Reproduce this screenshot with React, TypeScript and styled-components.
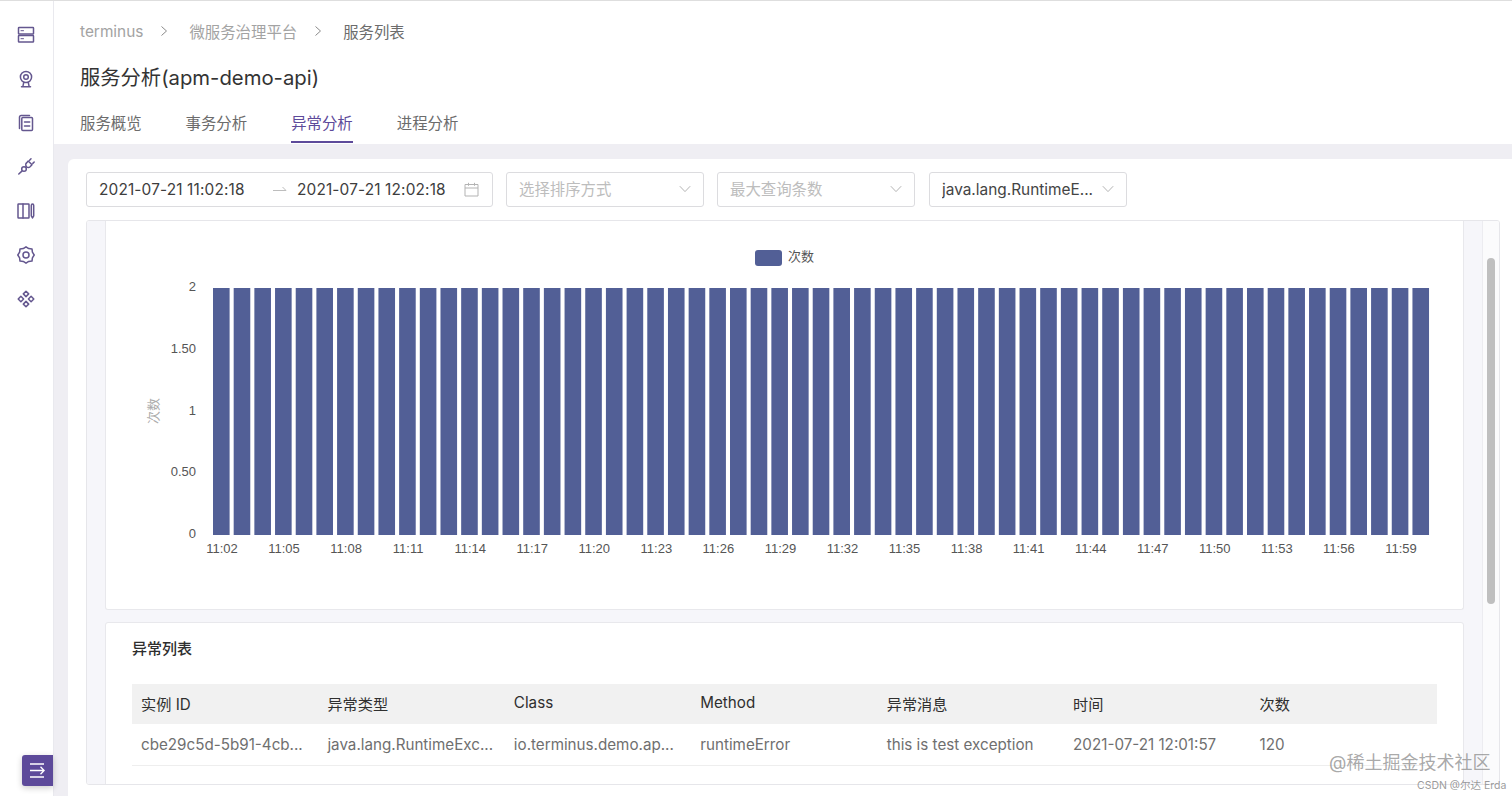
import React from "react";
import styled, { createGlobalStyle } from "styled-components";

const FONT = `Inter, "Noto Sans CJK SC", "Liberation Sans", sans-serif`;

const Global = createGlobalStyle`
  html, body { margin: 0; padding: 0; background: #fff; }
  body { font-family: ${FONT}; overflow: hidden; }
  * { box-sizing: border-box; }
`;

const Shell = styled.div`
  position: relative;
  display: flex;
  width: 1512px;
  height: 796px;
  overflow: hidden;
  border-top: 1px solid #dedede;
`;
const Sidebar = styled.nav`
  position: relative;
  flex: 0 0 54px;
  display: flex;
  flex-direction: column;
  align-items: center;
  gap: 24px;
  padding: 24px 2px 0 0;
  border-right: 1px solid #e9e9ee;
`;
const NavIcon = styled.svg`
  width: 20px;
  height: 20px;
  fill: none;
  stroke: #64578f;
  stroke-width: 1.5;
  stroke-linejoin: round;
  stroke-linecap: round;
`;
const Toggle = styled.button`
  position: absolute;
  left: 22px;
  top: 754px;
  width: 31px;
  height: 31px;
  padding: 0;
  border: 0;
  border-radius: 3px 0 0 3px;
  background: #5d4a9a;
  box-shadow: 0 2px 6px rgba(0, 0, 0, 0.2);
  display: flex;
  align-items: center;
  justify-content: center;
`;
const Main = styled.main`
  flex: 1;
  min-width: 0;
  display: flex;
  flex-direction: column;
`;
const Header = styled.header`
  flex: 0 0 143px;
  padding: 20px 0 0 26px;
  display: flex;
  flex-direction: column;
`;
const Crumbs = styled.div`
  display: flex;
  align-items: center;
  height: 22px;
  font-size: 15.4px;
  margin-top: -1px;
`;
const Crumb = styled.span<{ $current?: boolean }>`
  color: ${(p) => (p.$current ? "#6c6c6c" : "#a3a3a3")};
`;
const CrumbSep = styled.svg`
  width: 8px;
  height: 12px;
  margin: 0 21px 0 17px;
  fill: none;
  stroke: #8a8a8a;
  stroke-width: 1;
`;
const Title = styled.h1`
  margin: 20px 0 0;
  height: 32px;
  line-height: 32px;
  font-size: 20.3px;
  font-weight: 400;
  color: #333;
`;
const Tabs = styled.div`
  display: flex;
  gap: 44px;
  margin-top: 15px;
`;
const Tab = styled.div<{ $active?: boolean }>`
  height: 34px;
  padding-top: 3px;
  line-height: 24px;
  font-size: 15.4px;
  color: ${(p) => (p.$active ? "#5d4a9a" : "#6c6c6c")};
  border-bottom: 2px solid ${(p) => (p.$active ? "#5d4a9a" : "transparent")};
`;
const Body = styled.div`
  flex: 1;
  min-height: 0;
  background: #efeef3;
  padding: 15px 0 0 14px;
  display: flex;
`;
const Sheet = styled.section`
  flex: 1;
  min-width: 0;
  background: #fff;
  border-radius: 6px 0 0 0;
  padding: 13px 12px 11px 18px;
  display: flex;
  flex-direction: column;
  gap: 13px;
`;
const Filters = styled.div`
  display: flex;
  gap: 13px;
  flex: 0 0 35px;
`;
const Field = styled.div<{ $w: number; $nudge?: number }>`
  width: ${(p) => p.$w}px;
  height: 35px;
  margin-left: ${(p) => p.$nudge ?? 0}px;
  padding: 0 12px 1px;
  border: 1px solid #dcdcdf;
  border-radius: 3px;
  display: flex;
  align-items: center;
  font-size: 15.4px;
  color: #444;
`;
const FieldText = styled.span<{ $placeholder?: boolean }>`
  flex: 1;
  min-width: 0;
  white-space: nowrap;
  overflow: hidden;
  margin-bottom: ${(p) => (p.$placeholder ? "2px" : "0")};
  color: ${(p) => (p.$placeholder ? "#bdbdbd" : "#444")};
`;
const DateText = styled.span`
  white-space: nowrap;
  width: 147px;
  letter-spacing: 0.15px;
  color: #3d3d3d;
`;
const DateArrow = styled.svg`
  width: 14px;
  height: 8px;
  margin: 0 10px 0 27px;
  fill: none;
  stroke: #bdbdbd;
  stroke-width: 1;
`;
const Glyph = styled.svg`
  flex: none;
  fill: none;
  stroke: #b3b3b3;
  stroke-width: 1;
`;
const CalendarGlyph = styled(Glyph)`
  margin-left: 20px;
`;
const Panel = styled.div`
  flex: 1;
  min-height: 0;
  display: flex;
  overflow: hidden;
  border: 1px solid #e6e6ea;
  border-radius: 3px;
`;
const ScrollBody = styled.div`
  flex: 1;
  min-width: 0;
  overflow: hidden;
  background: #f6f6fa;
  padding: 0 18px;
  display: flex;
  flex-direction: column;
  gap: 12px;
  border-right: 1px solid #ececf0;
`;
const Track = styled.div`
  flex: 0 0 16px;
  background: #fbfbfc;
  padding: 37px 4px 0;
`;
const Thumb = styled.div`
  height: 346px;
  border-radius: 4px;
  background: #bfbfbf;
`;
const ChartCard = styled.div`
  flex: 0 0 388px;
  background: #fff;
  border: 1px solid #e8e8ec;
  border-top: 0;
  border-radius: 0 0 3px 3px;
`;
const ChartSvg = styled.svg`
  display: block;
  width: 1359px;
  height: 388px;
  margin-left: -1px;
  font-family: "Liberation Sans", ${FONT};
`;
const ListCard = styled.div`
  flex: 0 0 200px;
  background: #fff;
  border: 1px solid #e8e8ec;
  border-radius: 3px;
  padding: 15px 26px;
`;
const ListTitle = styled.h2`
  margin: 0 0 24px;
  height: 22px;
  line-height: 22px;
  font-size: 15px;
  font-weight: 500;
  color: #2e2e2e;
`;
const Table = styled.table`
  width: 1305px;
  table-layout: fixed;
  border-collapse: collapse;
  font-size: 15.2px;
`;
const Th = styled.th`
  height: 40px;
  padding: 0 9px 3px;
  text-align: left;
  font-weight: 400;
  color: #2f2f2f;
  background: #f1f1f1;
`;
const Td = styled.td`
  height: 41px;
  padding: 1px 9px 0;
  color: #6f6f6f;
  white-space: nowrap;
  overflow: hidden;
  border-bottom: 1px solid #eeeeee;
`;
const Watermark = styled.div`
  position: absolute;
  left: 1329px;
  top: 750px;
  font-size: 18px;
  line-height: 24px;
  white-space: nowrap;
  color: rgba(120, 120, 120, 0.65);
`;
const Credit = styled.div`
  position: absolute;
  left: 1417px;
  top: 777px;
  font-size: 10.5px;
  line-height: 16px;
  white-space: nowrap;
  color: rgba(120, 120, 120, 0.75);
`;

const Chevron = () => (
  <Glyph width="12" height="8" viewBox="0 0 12 8">
    <path d="M.8 1.2 6 6.6l5.2-5.4" />
  </Glyph>
);

const BAR_COLOR = "#525f96";
const bars = Array.from({ length: 59 }, (_, i) => 213 + i * 20.68);
const xLabels = Array.from({ length: 20 }, (_, i) => {
  const m = 2 + i * 3;
  return { x: 222 + i * 62.05, t: `11:${String(m).padStart(2, "0")}` };
});
const yLabels = [
  { y: 290, t: "2" },
  { y: 352, t: "1.50" },
  { y: 414, t: "1" },
  { y: 475, t: "0.50" },
  { y: 537, t: "0" },
];

const Chart = () => (
  <ChartSvg viewBox="105 220 1359 388">
    <rect x="755" y="249" width="27" height="16" rx="3" fill={BAR_COLOR} />
    <text x="788" y="260" fontSize="13" fill="#555" fontFamily={FONT}>次数</text>
    <text
      x="158"
      y="410"
      fontSize="13"
      fill="#ababab"
      textAnchor="middle"
      fontFamily={FONT}
      transform="rotate(-90 158 410)"
    >
      次数
    </text>
    {yLabels.map((l) => (
      <text key={l.t} x="196" y={l.y} fontSize="13" fill="#555" textAnchor="end">{l.t}</text>
    ))}
    {bars.map((x) => (
      <rect key={x} x={x} y="287" width="16.6" height="247" fill={BAR_COLOR} />
    ))}
    {xLabels.map((l) => (
      <text key={l.t} x={l.x} y="552" fontSize="13" fill="#555" textAnchor="middle">{l.t}</text>
    ))}
  </ChartSvg>
);

const columns = ["实例 ID", "异常类型", "Class", "Method", "异常消息", "时间", "次数"];
const row = [
  "cbe29c5d-5b91-4cb...",
  "java.lang.RuntimeExc...",
  "io.terminus.demo.ap...",
  "runtimeError",
  "this is test exception",
  "2021-07-21 12:01:57",
  "120",
];

export default function App() {
  return (
    <>
      <Global />
      <Shell>
        <Sidebar>
          <NavIcon viewBox="0 0 20 20">
            <rect x="2.5" y="2.5" width="15" height="6.5" rx=".6" />
            <rect x="2.5" y="10.5" width="15" height="6.5" rx=".6" />
            <path d="M5 5.7h2.5M5 13.7h2.5" strokeWidth="1" />
          </NavIcon>
          <NavIcon viewBox="0 0 20 20">
            <circle cx="10" cy="8" r="5.6" />
            <circle cx="10" cy="8" r="2.3" />
            <path d="M7.8 13.2 6.8 17.8M12.2 13.2l1 4.6M5.5 17.8h9" />
          </NavIcon>
          <NavIcon viewBox="0 0 20 20">
            <path d="M3.5 15.5V4.2c0-.9.7-1.7 1.6-1.7h8.4" />
            <rect x="5.8" y="4.5" width="10.7" height="13" rx="1" />
            <path d="M8.5 9h5.2M8.5 13h5.2" />
          </NavIcon>
          <NavIcon viewBox="0 0 20 20">
            <path d="m12.2 4 3.8 3.8-1.9 1.9c-1 .9-2.6.9-3.6 0-1-1-1-2.8 0-3.8z" />
            <circle cx="8" cy="12" r="2.3" />
            <path d="M5.9 14.1 2.8 17M13.6 3.2 15 1.8M16.8 6.4l1.4-1.4M9.7 10.3l.6-.6" />
          </NavIcon>
          <NavIcon viewBox="0 0 20 20">
            <rect x="2" y="3" width="11" height="14" rx=".5" />
            <path d="M7 3v14" />
            <path d="M15.3 4.4c0-.8.5-1.4 1.2-1.4s1.2.6 1.2 1.4v10.4l-1.2 2.2-1.2-2.2z" />
          </NavIcon>
          <NavIcon viewBox="0 0 20 20">
            <path d="M10 1.8 12.7 3.6 16 3.9 16.4 7.2 18.2 10 16.4 12.8 16 16.1 12.7 16.4 10 18.2 7.3 16.4 4 16.1 3.6 12.8 1.8 10 3.6 7.2 4 3.9 7.3 3.6z" />
            <circle cx="10" cy="10" r="3" />
          </NavIcon>
          <NavIcon viewBox="0 0 20 20">
            <path d="m10 2.2 2.7 2.7L10 7.6 7.3 4.9zM10 12.4l2.7 2.7L10 17.8l-2.7-2.7zM4.9 7.3 7.6 10l-2.7 2.7L2.2 10zM15.1 7.3l2.7 2.7-2.7 2.7-2.7-2.7z" />
          </NavIcon>
          <Toggle aria-label="toggle">
            <svg width="15" height="15" viewBox="0 0 15 15" fill="none" stroke="#fff" strokeWidth="1.3">
              <path d="M0 1h14M0 7.5h14M0 14h14M10.5 3.8l3.6 3.7-3.6 3.7" />
            </svg>
          </Toggle>
        </Sidebar>
        <Main>
          <Header>
            <Crumbs>
              <Crumb>terminus</Crumb>
              <CrumbSep viewBox="0 0 8 12"><path d="m1.5 1.5 5 4.5-5 4.5" /></CrumbSep>
              <Crumb>微服务治理平台</Crumb>
              <CrumbSep viewBox="0 0 8 12"><path d="m1.5 1.5 5 4.5-5 4.5" /></CrumbSep>
              <Crumb $current>服务列表</Crumb>
            </Crumbs>
            <Title>服务分析(apm-demo-api)</Title>
            <Tabs>
              <Tab>服务概览</Tab>
              <Tab>事务分析</Tab>
              <Tab $active>异常分析</Tab>
              <Tab>进程分析</Tab>
            </Tabs>
          </Header>
          <Body>
            <Sheet>
              <Filters>
                <Field $w={407}>
                  <DateText>2021-07-21 11:02:18</DateText>
                  <DateArrow viewBox="0 0 14 8"><path d="M0 5.5h13L9.5 2" /></DateArrow>
                  <DateText>2021-07-21 12:02:18</DateText>
                  <CalendarGlyph width="15" height="15" viewBox="0 0 15 15">
                    <path d="M1 2.5h13v11.5H1zM1 6h13M4.5 .8v3M10.5 .8v3" />
                  </CalendarGlyph>
                </Field>
                <Field $w={198}><FieldText $placeholder>选择排序方式</FieldText><Chevron /></Field>
                <Field $w={198}><FieldText $placeholder>最大查询条数</FieldText><Chevron /></Field>
                <Field $w={198} $nudge={1}><FieldText>java.lang.RuntimeE...</FieldText><Chevron /></Field>
              </Filters>
              <Panel>
                <ScrollBody>
                  <ChartCard><Chart /></ChartCard>
                  <ListCard>
                    <ListTitle>异常列表</ListTitle>
                    <Table>
                      <thead>
                        <tr>{columns.map((c) => <Th key={c}>{c}</Th>)}</tr>
                      </thead>
                      <tbody>
                        <tr>{row.map((c) => <Td key={c}>{c}</Td>)}</tr>
                      </tbody>
                    </Table>
                  </ListCard>
                </ScrollBody>
                <Track><Thumb /></Track>
              </Panel>
            </Sheet>
          </Body>
        </Main>
        <Watermark>@稀土掘金技术社区</Watermark>
        <Credit>CSDN @尔达 Erda</Credit>
      </Shell>
    </>
  );
}
